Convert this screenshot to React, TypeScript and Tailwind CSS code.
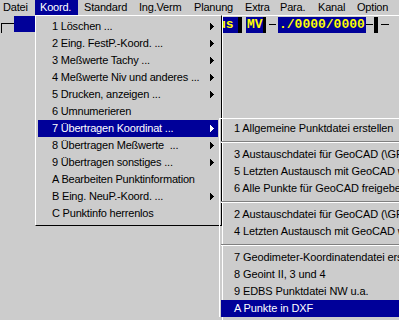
import React from "react";

const NAVY = "bg-[#000099]";

type Entry = { label: string; sub?: boolean; active?: boolean };

const koordItems: Entry[] = [
  { label: "1 Löschen ...", sub: true },
  { label: "2 Eing. FestP.-Koord. ...", sub: true },
  { label: "3 Meßwerte Tachy ...", sub: true },
  { label: "4 Meßwerte Niv und anderes ...", sub: true },
  { label: "5 Drucken, anzeigen ...", sub: true },
  { label: "6 Umnumerieren" },
  { label: "7 Übertragen Koordinat ...", sub: true, active: true },
  { label: "8 Übertragen Meßwerte  ...", sub: true },
  { label: "9 Übertragen sonstiges ...", sub: true },
  { label: "A Bearbeiten Punktinformation" },
  { label: "B Eing. NeuP.-Koord. ...", sub: true },
  { label: "C Punktinfo herrenlos" },
];

// null = separator
const exportItems: (Entry | null)[] = [
  { label: "1 Allgemeine Punktdatei erstellen" },
  null,
  { label: "3 Austauschdatei für GeoCAD (\\GFK)" },
  { label: "5 Letzten Austausch mit GeoCAD wiederholen" },
  { label: "6 Alle Punkte für GeoCAD freigeben" },
  null,
  { label: "2 Austauschdatei für GeoCAD (\\GFK)" },
  { label: "4 Letzten Austausch mit GeoCAD wiederholen" },
  null,
  { label: "7 Geodimeter-Koordinatendatei erstellen" },
  { label: "8 Geoint II, 3 und 4" },
  { label: "9 EDBS Punktdatei NW u.a." },
  { label: "A Punkte in DXF", active: true },
];

const menuBar = [
  { label: "Datei", cls: "w-[35px] pl-[3px]" },
  { label: "Koord.", cls: "w-[43px] pl-[5px]", active: true },
  { label: "Standard", cls: "w-[55px] pl-[6px]" },
  { label: "Ing.Verm", cls: "w-[54px] pl-[6px]" },
  { label: "Planung", cls: "w-[52px] pl-[7px]" },
  { label: "Extra", cls: "w-[35px] pl-[6px]" },
  { label: "Para.", cls: "w-[38px] pl-[6px]" },
  { label: "Kanal", cls: "w-[39px] pl-[6px]" },
  { label: "Option", cls: "w-[48px] pl-[6px]" },
];

function Arrow() {
  return (
    <svg width="4" height="7" viewBox="0 0 4 7" className="fill-current" shapeRendering="crispEdges">
      <path d="M0 0h1v7H0zM1 1h1v5H1zM2 2h1v3H2zM3 3h1v1H3z" />
    </svg>
  );
}

function Field({ text, cls }: { text: string; cls: string }) {
  return (
    <div className={`h-[16px] overflow-hidden whitespace-pre ${NAVY} font-['Liberation_Mono',monospace] text-[13px] font-bold leading-[16px] tracking-normal text-[#ffff00] ${cls}`}>
      {text}
    </div>
  );
}

export default function App() {
  return (
    <div className="relative flex h-[320px] w-[399px] flex-col overflow-hidden bg-[#cccccc] font-['Liberation_Sans',Arial,sans-serif] text-[11px] tracking-[-0.2px] text-black">
      {/* menu bar */}
      <div className="flex h-[15px] leading-[15px]">
        {menuBar.map((m) => (
          <div key={m.label} className={`${m.cls} shrink-0 ${m.active ? `${NAVY} text-white` : ""}`}>
            {m.label}
          </div>
        ))}
      </div>

      <div className="flex flex-1">
        {/* left toolbar bits, mostly hidden under the menu */}
        <div className="w-[222px] shrink-0">
          <div className="flex h-[18px] items-start pt-[1px]">
            <div className="ml-[1px] mt-[7px] h-[10px] w-[13px] border-l border-t border-black" />
            <div className={`h-[16px] w-[21px] ${NAVY}`} />
          </div>
        </div>

        {/* document window */}
        <div className="flex-1 border-l border-t border-white">
          <div className="flex h-[17px] items-start pt-[1px]">
            <Field text="us" cls="w-[15px] pl-0 [text-indent:-5px]" />
            <div className="h-[16px] w-[4px] bg-black" />
            <div className="w-[4px]" />
            <Field text="MV" cls="w-[17px] pl-[1px]" />
            <div className="h-[16px] w-[3px] bg-black" />
            <div className="ml-[3px] mt-[7px] h-px w-[7px] bg-black" />
            <div className="w-[2px]" />
            <Field text="./0000/0000" cls="w-[88px] pl-[1px]" />
            <div className="mt-[7px] h-px w-[7px] bg-black" />
            <div className="ml-[1px] h-[16px] w-[4px] bg-black" />
            <div className="ml-[3px] mt-[7px] h-px w-[8px] bg-black" />
          </div>
        </div>
      </div>

      {/* Koord. dropdown */}
      <div className="absolute left-[35px] top-[15px] h-[211px] w-[187px] border-b border-l border-r border-t border-b-black border-l-white border-r-black border-t-white pl-[2px] pr-[3px] pt-[2px]">
        {koordItems.map((it) => (
          <div
            key={it.label}
            className={`flex h-[17px] items-center justify-between whitespace-pre pl-[14px] pr-[4px] leading-[17px] ${it.active ? `${NAVY} text-white` : ""}`}
          >
            <span>{it.label}</span>
            {it.sub && <Arrow />}
          </div>
        ))}
      </div>

      {/* Übertragen submenu */}
      <div className="absolute left-[219px] top-[118px] w-[200px] border-l border-t border-white pl-[1px] pt-[1px] tracking-[-0.1px]">
        {exportItems.map((it, i) =>
          it ? (
            <div
              key={i}
              className={`h-[17px] overflow-hidden whitespace-pre pl-[13px] leading-[17px] ${it.active ? `${NAVY} text-white` : ""}`}
            >
              {it.label}
            </div>
          ) : (
            <div key={i} className="h-[9px] pt-[4px]">
              <div className="h-px bg-[#808080]" />
              <div className="h-px bg-white" />
            </div>
          )
        )}
      </div>
    </div>
  );
}
